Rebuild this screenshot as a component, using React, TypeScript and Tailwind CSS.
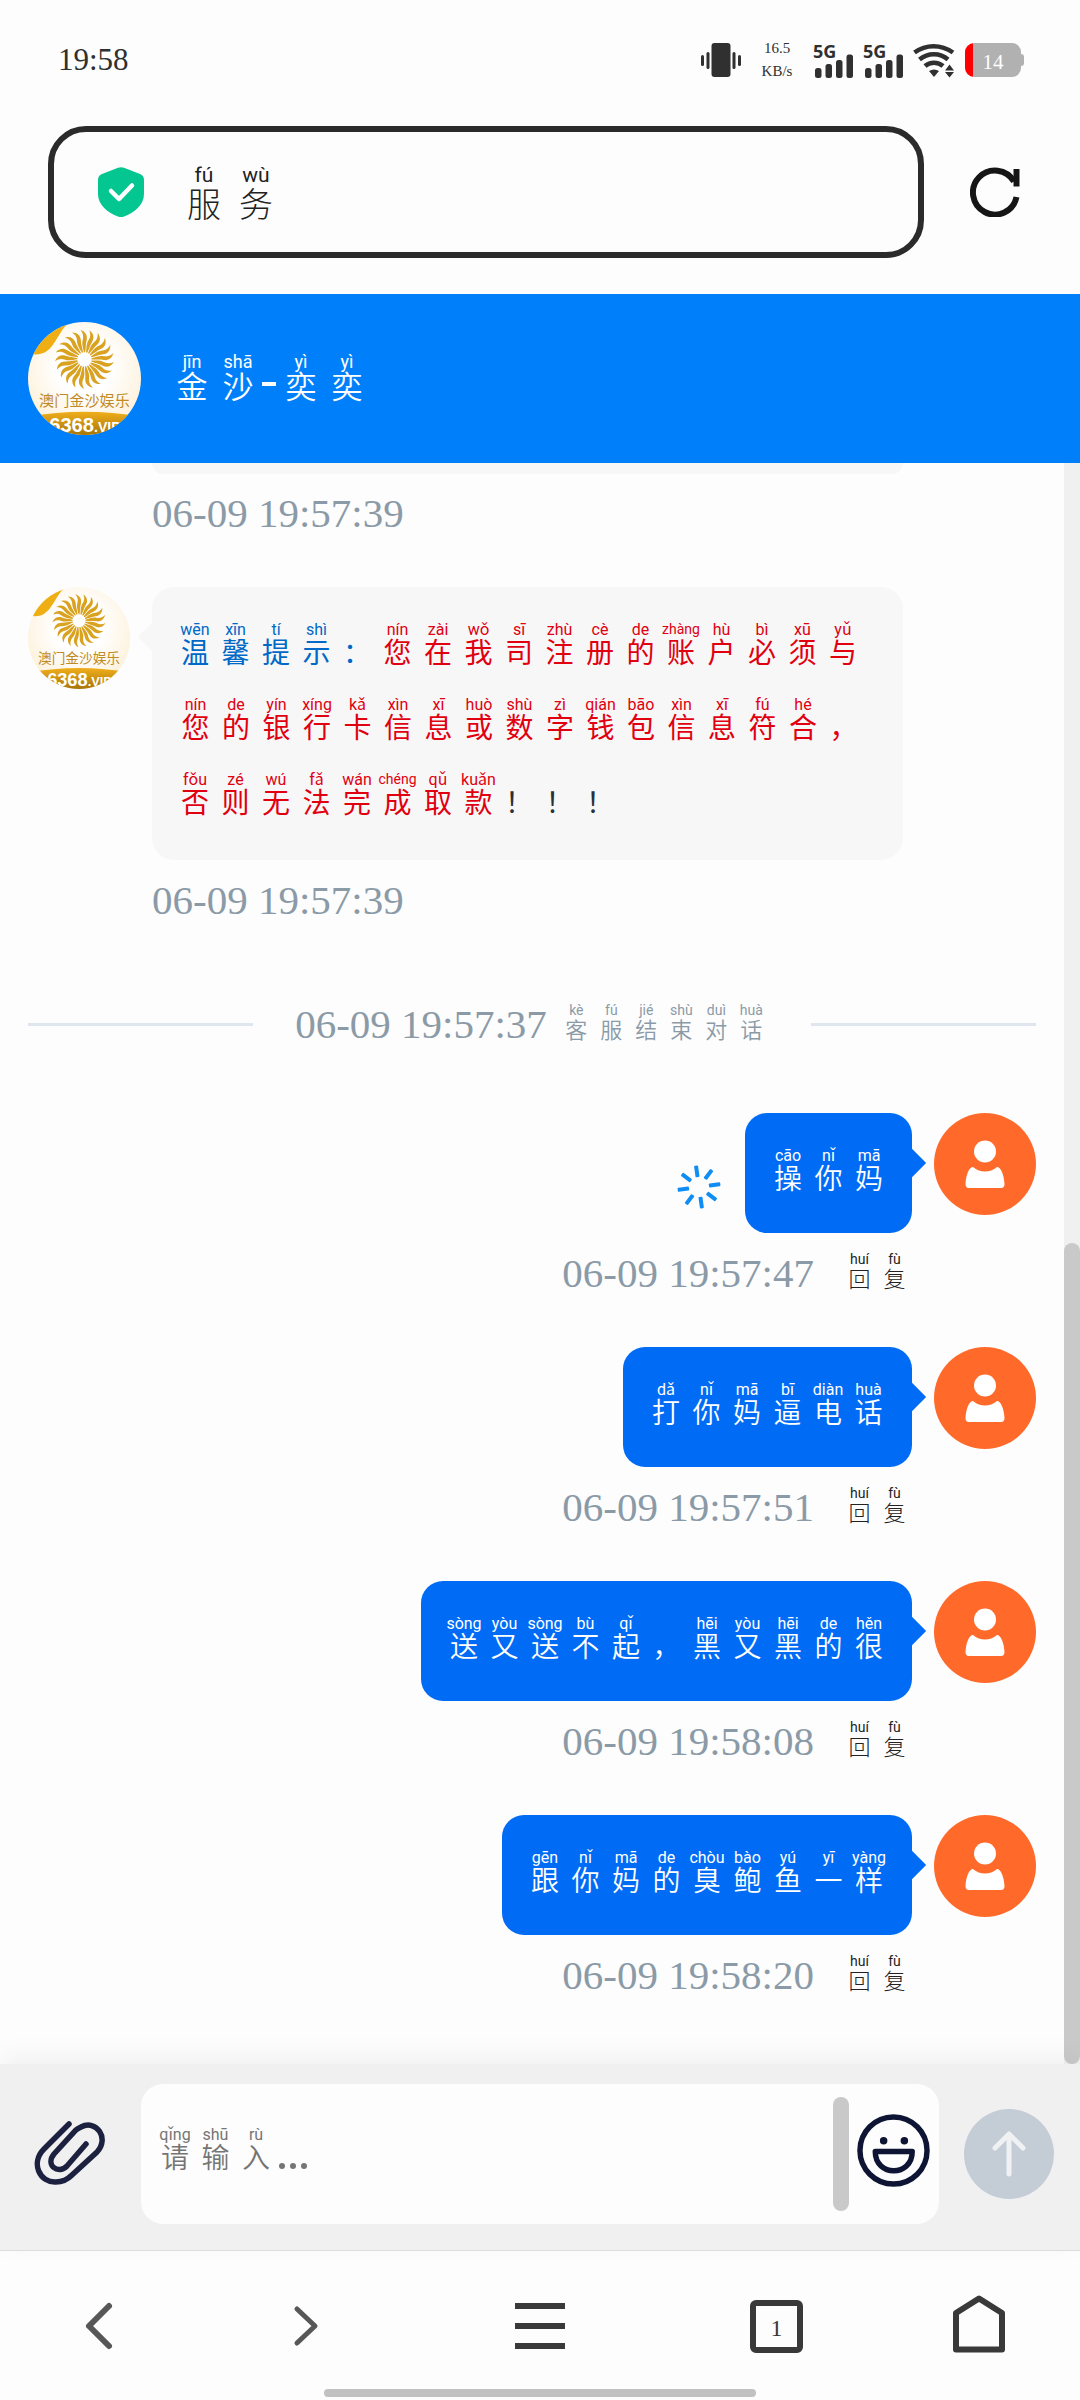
import React from 'react';

type Glyph = [hanzi: string, pinyin?: string, color?: string];
type Size = 'xs' | 'sm' | 'md' | 'lg';

const CELL: Record<Size, string> = {
  xs: 'w-[35px] h-12 pt-0.5 gap-px text-[22px] leading-[22px]',
  sm: 'w-10 even:w-[41px] h-[75px] pt-[9px] gap-px text-[28px] leading-[28px]',
  md: 'w-[46px] h-[58px] pt-0.5 text-[31px] leading-[31px]',
  lg: 'w-[52px] h-[62px] pt-0.5 gap-px text-[34px] leading-[34px]',
};

const PINYIN: Record<Size, string> = {
  xs: 'h-[17px] text-[14px] leading-[17px]',
  sm: 'h-[19px] text-[16px] leading-[19px]',
  md: 'h-5 text-[18px] leading-5',
  lg: 'h-6 text-[21px] leading-6',
};

const LATIN = "font-['Roboto','Noto_Sans_CJK_SC',sans-serif]";
const CJK = "font-['Liberation_Sans','Noto_Sans_CJK_SC',sans-serif]";

function Cell({ glyph, size }: { glyph: Glyph; size: Size }) {
  const [hanzi, pinyin = '', color = ''] = glyph;
  const long = pinyin.length > 4;
  return (
    <span className={`flex shrink-0 flex-col items-center whitespace-nowrap ${CELL[size]} ${color}`}>
      <span className={`flex justify-center font-normal ${LATIN} ${PINYIN[size]}`}>
        <span className={long ? 'text-[14px]' : ''}>{pinyin}</span>
      </span>
      <span>{hanzi}</span>
    </span>
  );
}

function Pinyin({ text, size, className = '' }: { text: Glyph[]; size: Size; className?: string }) {
  return (
    <span className={`flex ${CJK} ${className}`}>
      {text.map((g, i) => (
        <Cell key={i} glyph={g} size={size} />
      ))}
    </span>
  );
}

const zip = (hanzi: string, pinyin: string, color?: string): Glyph[] => {
  const p = pinyin.split(' ');
  return [...hanzi].map((h, i) => [h, p[i] === '_' ? '' : p[i], color]);
};

const NOTICE: Glyph[] = [
  ...zip('温馨提示：', 'wēn xīn tí shì _', 'text-[#0068c6]'),
  ...zip('您在我司注册的账户必须与', 'nín zài wǒ sī zhù cè de zhàng hù bì xū yǔ', 'text-[#e00010]'),
  ...zip('您的银行卡信息或数字钱包信息符合，', 'nín de yín xíng kǎ xìn xī huò shù zì qián bāo xìn xī fú hé _', 'text-[#e00010]'),
  ...zip('否则无法完成取款', 'fǒu zé wú fǎ wán chéng qǔ kuǎn', 'text-[#e00010]'),
  ...zip('！！！', '_ _ _', 'text-[#2b3036]'),
];

const SENT = [
  { text: zip('操你妈', 'cāo nǐ mā'), time: '06-09 19:57:47', sending: true },
  { text: zip('打你妈逼电话', 'dǎ nǐ mā bī diàn huà'), time: '06-09 19:57:51', sending: false },
  { text: zip('送又送不起，黑又黑的很', 'sòng yòu sòng bù qǐ _ hēi yòu hēi de hěn'), time: '06-09 19:58:08', sending: false },
  { text: zip('跟你妈的臭鲍鱼一样', 'gēn nǐ mā de chòu bào yú yī yàng'), time: '06-09 19:58:20', sending: false },
];

const REPLY = zip('回复', 'huí fù');

function Time({ children }: { children: string }) {
  return <time className="text-[41px] leading-[48px] whitespace-nowrap text-[#8b9aa7]">{children}</time>;
}

function AgentAvatar({ className }: { className: string }) {
  const rays = Array.from({ length: 21 }, (_, i) => (i * 360) / 21);
  return (
    <svg viewBox="0 0 112 112" className={`shrink-0 rounded-full ${className}`} role="img" aria-label="澳门金沙娱乐">
      <defs>
        <radialGradient id="paper" cx="0.5" cy="0.4" r="0.6">
          <stop offset="0.4" stopColor="#ffffff" />
          <stop offset="1" stopColor="#fdf0d8" />
        </radialGradient>
        <linearGradient id="band" x1="0" y1="0" x2="0" y2="1">
          <stop offset="0" stopColor="#f0ae1c" />
          <stop offset="1" stopColor="#a87508" />
        </linearGradient>
      </defs>
      <rect width="112" height="112" fill="url(#paper)" />
      <path d="M0 0H42C34 5 31 14 25 22 19 31 11 34 0 31Z" fill="#eeae14" />
      <g fill="#d9a220">
        {rays.map((a) => (
          <path
            key={a}
            transform={`translate(56 37) rotate(${a})`}
            d="M-.5-7C-1.500-12-3-15-1.600-20-.8-23-1.500-26-4-29 1-27.500 3.200-23.500 2.100-19 1-15 1.500-12 .6-7Z"
          />
        ))}
      </g>
      <text x="56" y="83" textAnchor="middle" fontSize="15" fill="#c08a24" className="font-['Noto_Sans_CJK_SC',sans-serif]">
        澳门金沙娱乐
      </text>
      <path d="M0 94Q56 84 112 94V112H0Z" fill="url(#band)" />
      <text x="21" y="109" fontSize="20" fontWeight="700" fill="#fff" className="font-['Liberation_Sans',sans-serif]">
        6368<tspan fontSize="14">.VIP</tspan>
      </text>
    </svg>
  );
}

function UserAvatar() {
  return (
    <svg viewBox="0 0 102 102" className="size-[102px] shrink-0" role="img" aria-label="用户">
      <circle cx="51" cy="51" r="51" fill="#ff6a2b" />
      <circle cx="51" cy="38.500" r="11" fill="#fff" />
      <path d="M39 54C46 60 56 60 63 54 67 54 70 62 70.500 71Q70.500 75 67 75H35Q31.500 75 31.500 71C32 62 35 54 39 54Z" fill="#fff" />
    </svg>
  );
}

function Signal() {
  return (
    <div className="relative h-9 w-10">
      <span className="absolute top-0 left-0 font-['Noto_Sans',sans-serif] text-[18px] leading-[18px] font-bold">5G</span>
      <svg viewBox="0 0 40 36" className="size-full" aria-hidden="true" fill="#303030">
        <rect x="2" y="26" width="6.500" height="10" rx="2.500" />
        <rect x="12.500" y="22" width="6.500" height="14" rx="2.500" />
        <rect x="23" y="18" width="6.500" height="18" rx="2.500" />
        <rect x="33.500" y="12.500" width="6.500" height="23.500" rx="2.500" />
      </svg>
    </div>
  );
}

function StatusBar() {
  return (
    <div className="flex h-12 items-center justify-between pr-14 pl-[58px] text-[#303030]">
      <span className="text-[31px]">19:58</span>
      <div className="flex items-center gap-[10px]">
        <svg viewBox="0 0 40 36" className="h-9 w-10" aria-hidden="true" fill="#303030">
          <rect x="10.500" y="1" width="19" height="34" rx="3" />
          <rect x="0" y="13" width="3" height="11" rx="1.500" />
          <rect x="5.500" y="10" width="3" height="17" rx="1.500" />
          <rect x="31.500" y="10" width="3" height="17" rx="1.500" />
          <rect x="37" y="13" width="3" height="11" rx="1.500" />
        </svg>
        <div className="mx-[11px] flex w-[30px] flex-col items-center text-[15px] leading-[23px]">
          <span>16.5</span>
          <span>KB/s</span>
        </div>
        <Signal />
        <Signal />
        <svg viewBox="0 0 42 36" className="h-9 w-[42px]" aria-hidden="true" fill="none" stroke="#303030" strokeWidth="4.500">
          <path d="M1.500 10.500C13 2 28 2 40 10.500" />
          <path d="M6.500 17.500C15 10.500 27 10.500 35 17.500" />
          <path d="M12 24C17 19.500 25 19.500 30 24" />
          <path d="M16 29Q21 26 26 29L21 35Z" fill="#303030" stroke="none" />
          <path d="M32 28.500L36.500 22.500 41 28.500ZM32 30L36.500 35.500 41 30Z" fill="#303030" stroke="none" />
        </svg>
        <div className="flex items-center">
          <div className="flex h-[34px] w-[56px] items-center justify-center overflow-hidden rounded-[9px] bg-linear-to-r from-[#f00] from-[8px] to-[#b1b1b1] to-[8px] pt-1 text-[21px] leading-6 text-white">
            14
          </div>
          <div className="h-3 w-[3px] rounded-r bg-[#b1b1b1]" />
        </div>
      </div>
    </div>
  );
}

function AddressRow() {
  return (
    <div className="mt-[42px] mb-9 flex items-center pr-[60px] pl-12">
      <button type="button" className="flex h-[132px] flex-1 items-center rounded-[38px] border-[6px] border-[#2b2b2b] bg-[#fdfdfd] pl-11 text-[#222]">
        <svg viewBox="0 0 46 50" className="h-[50px] w-[46px]" aria-hidden="true">
          <path d="M20 .8Q23-.4 26 .8L42 7Q46 8.500 46 13V27C46 38 36 46 26 49.400Q23 50.400 20 49.400C10 46 0 38 0 27V13Q0 8.500 4 7Z" fill="#04c690" />
          <path d="M13 24L21 32 34 18.500" fill="none" stroke="#fff" strokeWidth="4.500" strokeLinecap="round" strokeLinejoin="round" />
        </svg>
        <Pinyin size="lg" className="ml-[34px] font-light" text={zip('服务', 'fú wù')} />
      </button>
      <button type="button" aria-label="刷新" className="ml-[46px]">
        <svg viewBox="0 0 50 50" className="size-[50px]" fill="none" stroke="#161616" strokeWidth="6">
          <path d="M46.500 30A22 22 0 1 1 44 14.500" />
          <path d="M46.500 2V19.500" />
        </svg>
      </button>
    </div>
  );
}

function Spinner() {
  const spokes = [-8, 37, 82, 127, 172, 217, 262, 307];
  return (
    <svg viewBox="0 0 44 44" className="mr-6 mb-6 size-11" role="img" aria-label="发送中">
      {spokes.map((a) => (
        <rect key={a} x="20" y="0.500" width="4" height="11.500" rx="1" fill="#108df2" transform={`rotate(${a} 22 22)`} />
      ))}
    </svg>
  );
}

function SentMessage({ message }: { message: (typeof SENT)[number] }) {
  return (
    <li className="flex items-start justify-end gap-[22px]">
      <div className="flex flex-col items-end">
        <div className="flex items-end">
          {message.sending && <Spinner />}
          <div className="relative rounded-[22px] bg-[#006cf6] px-[23px] pt-6 pb-[21px] text-white">
            <span className="absolute top-10 -right-[10px] size-5 rotate-45 bg-[#006cf6]" />
            <Pinyin size="sm" text={message.text} className="relative font-[350]" />
          </div>
        </div>
        <div className="mt-4 flex gap-7">
          <Time>{message.time}</Time>
          <button type="button" className="text-[#222]">
            <Pinyin size="xs" text={REPLY} className="font-light" />
          </button>
        </div>
      </div>
      <UserAvatar />
    </li>
  );
}

function Chat() {
  return (
    <main className="flex flex-1">
      <ul className="flex flex-1 flex-col gap-[50px] pr-7 pl-7">
        <li className="flex flex-col pl-[124px]">
          <div className="h-[11px] w-[751px] rounded-b-[22px] bg-[#f7f7f7]" />
          <span className="mt-[15px] flex">
            <Time>06-09 19:57:39</Time>
          </span>
        </li>
        <li className="flex items-start gap-[22px]">
          <AgentAvatar className="size-[102px]" />
          <div className="flex flex-col items-start">
            <div className="relative max-w-[751px] rounded-[22px] bg-[#f7f7f7] px-[23px] py-6">
              <span className="absolute top-10 -left-[10px] size-5 rotate-45 bg-[#f7f7f7]" />
              <Pinyin size="sm" text={NOTICE} className="relative flex-wrap" />
            </div>
            <span className="mt-4 flex">
              <Time>06-09 19:57:39</Time>
            </span>
          </div>
        </li>
        <li className="mt-[26px] mb-[15px] flex items-center">
          <span className="h-[3px] flex-1 bg-[#dfe6ee]" />
          <span className="mx-[42px] flex gap-3">
            <Time>06-09 19:57:37</Time>
            <Pinyin size="xs" text={zip('客服结束对话', 'kè fú jié shù duì huà')} className="font-[350] text-[#8b9aa7]" />
          </span>
          <span className="h-[3px] flex-1 bg-[#dfe6ee]" />
        </li>
        {SENT.map((m) => (
          <SentMessage key={m.time} message={m} />
        ))}
      </ul>
      <div className="flex w-4 flex-col bg-[#f0f0f0]" aria-hidden="true">
        <span className="grow-[39]" />
        <span className="grow-[41] rounded-full bg-[#c9c9c9]" />
      </div>
    </main>
  );
}

function Composer() {
  return (
    <form className="relative flex items-center border-b border-[#dcdcdc] bg-[#f0f0f0] pt-5 pr-[26px] pb-[26px] pl-[34px] shadow-[0_-8px_24px_rgba(0,0,0,0.05)]" onSubmit={(e) => e.preventDefault()}>
      <button type="button" aria-label="附件">
        <svg viewBox="0 0 72 66" className="h-[66px] w-[72px]" fill="none" stroke="#1c2140" strokeWidth="5.500" strokeLinecap="round">
          <path d="M35 3L10 28C-4 42 6 62 22 61C28 61 33 59 38 54L63 31C76 17 62-2 47 6C45 7 43 8 42 9L20 33C11 44 24 54 33 45L52 23" />
        </svg>
      </button>
      <div className="relative ml-[35px] flex h-[140px] flex-1 items-center rounded-[22px] bg-[#fdfdfd] pr-[9px]">
        <textarea id="message" className="h-[114px] flex-1 resize-none bg-transparent px-4 text-[28px] outline-none" />
        <label htmlFor="message" className="pointer-events-none absolute top-8 left-[14px] flex text-[#757575]">
          <Pinyin size="sm" text={zip('请输入', 'qǐng shū rù')} className="font-[350]" />
          <span className="mt-[47px] ml-[3px] flex gap-[5px]" role="img" aria-label="…">
            <i className="size-[6px] rounded-full bg-[#757575]" />
            <i className="size-[6px] rounded-full bg-[#757575]" />
            <i className="size-[6px] rounded-full bg-[#757575]" />
          </span>
        </label>
        <span className="mr-2 h-[114px] w-4 rounded-full bg-[#c9c9c9]" aria-hidden="true" />
        <button type="button" aria-label="表情" className="mb-2">
          <svg viewBox="0 0 74 74" className="size-[73px]" fill="none" stroke="#0e1433" strokeWidth="5.500">
            <circle cx="37" cy="37" r="34" />
            <path d="M18.500 38H56C56 64 18.500 64 18.500 38Z" strokeLinejoin="round" />
            <circle cx="27" cy="27" r="3.800" fill="#0e1433" stroke="none" />
            <circle cx="48" cy="27" r="3.800" fill="#0e1433" stroke="none" />
          </svg>
        </button>
      </div>
      <button type="submit" aria-label="发送" className="ml-[25px] flex size-[90px] items-center justify-center rounded-full bg-[#c4ccd6]">
        <svg viewBox="0 0 34 46" className="h-[46px] w-[34px]" fill="none" stroke="#f0f1f3" strokeWidth="5" strokeLinecap="round" strokeLinejoin="round">
          <path d="M17 43V4M3 17L17 3 31 17" />
        </svg>
      </button>
    </form>
  );
}

function BrowserNav() {
  return (
    <footer className="bg-[#fdfdfd] pt-11 pb-[3px]">
      <nav className="flex h-[62px] items-center justify-between pr-[74px] pl-[84px] text-[#393939]">
        <button type="button" aria-label="后退" className="mr-[158px]">
          <svg viewBox="0 0 30 50" className="h-[50px] w-[30px]" fill="none" stroke="#575757" strokeWidth="6" strokeLinecap="round">
            <path d="M25 5L5 25 25 45" strokeLinejoin="round" />
          </svg>
        </button>
        <button type="button" aria-label="前进" className="mr-[175px]">
          <svg viewBox="0 0 28 44" className="h-11 w-7" fill="none" stroke="#575757" strokeWidth="5" strokeLinecap="round">
            <path d="M5 5L23 22 5 39" strokeLinejoin="round" />
          </svg>
        </button>
        <button type="button" aria-label="菜单" className="mr-[165px]">
          <svg viewBox="0 0 50 48" className="h-12 w-[50px]" fill="#393939">
            <path d="M0 1H50V7H0ZM0 21H50V27H0ZM0 41H50V47H0Z" />
          </svg>
        </button>
        <button type="button" aria-label="标签页" className="mr-[129px] flex size-[53px] items-center justify-center rounded-[6px] border-[6px] border-[#393939] pt-1 text-[24px]">
          1
        </button>
        <button type="button" aria-label="主页" className="mb-1">
          <svg viewBox="0 0 54 58" className="h-[58px] w-[54px]" fill="none" stroke="#393939" strokeWidth="6" strokeLinejoin="round">
            <path d="M27 3.500L50 18V54.500H4V18Z" />
          </svg>
        </button>
      </nav>
      <div className="mx-auto mt-8 h-2 w-[40%] rounded-full bg-[#c1c1c1]" />
    </footer>
  );
}

export default function App() {
  return (
    <div className="flex min-h-screen flex-col bg-[#fdfdfd] font-['Liberation_Serif',serif]">
      <div className="pt-9">
        <StatusBar />
        <AddressRow />
      </div>
      <header className="flex h-[169px] items-center bg-[#007ffa] pl-7 text-white">
        <AgentAvatar className="size-[113px]" />
        <h1 className="ml-7 flex">
          <Pinyin size="md" text={zip('金沙', 'jīn shā')} className="font-[350]" />
          <span className="mt-8 mr-0.5 ml-px h-1 w-[14px] bg-white" />
          <Pinyin size="md" text={zip('奕奕', 'yì yì')} className="font-[350]" />
        </h1>
      </header>
      <Chat />
      <Composer />
      <BrowserNav />
    </div>
  );
}
